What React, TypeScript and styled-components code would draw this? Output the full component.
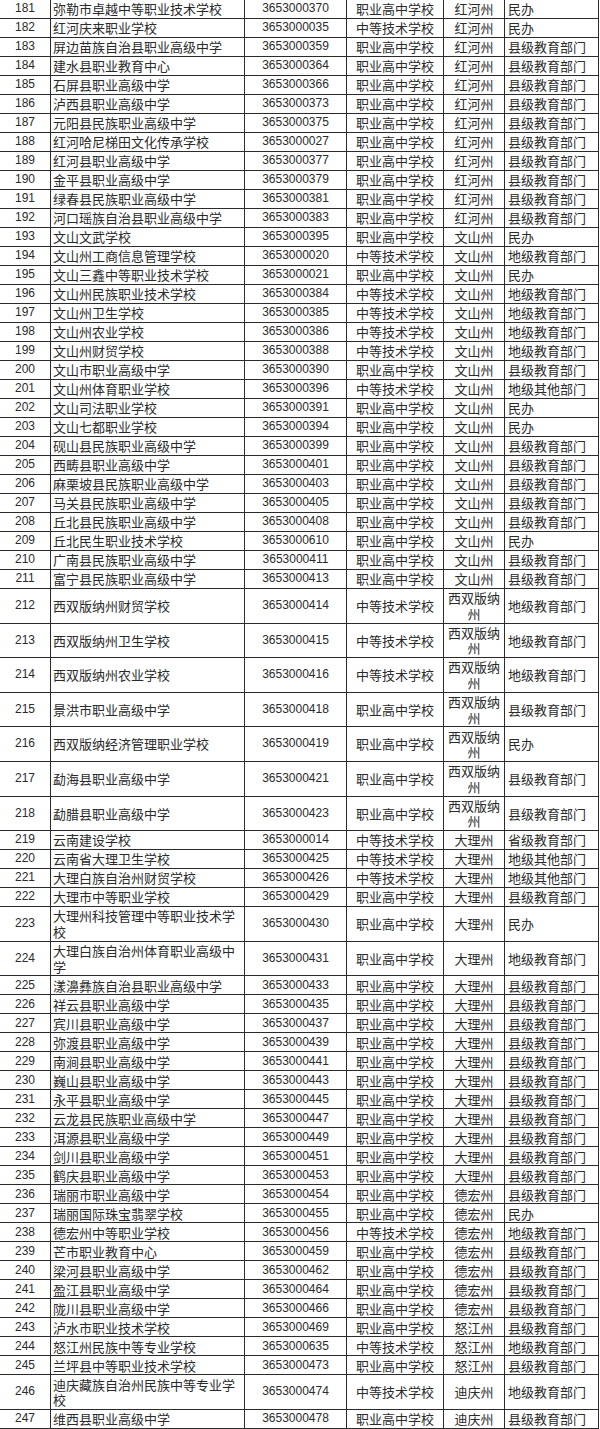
import React from 'react';
import styled, { createGlobalStyle } from 'styled-components';

const GlobalStyle = createGlobalStyle`
  html, body { margin: 0; padding: 0; background: #fff; }
  body { width: 600px; height: 1429px; overflow: hidden; }
`;

const Table = styled.div`
  display: flex;
  flex-direction: column;
  width: 599px;
  font-family: "Noto Sans CJK SC", "Liberation Sans", sans-serif;
  font-size: 13px;
  color: #2a2a2a;
`;

const Row = styled.div<{ $tall?: boolean }>`
  display: grid;
  grid-template-columns: 51px 194px 102px 97px 61px 94px;
  height: ${(p) => (p.$tall ? '34.6px' : '19px')};
  box-sizing: border-box;
  border-bottom: 1px solid #2b2b2b;
`;

const Cell = styled.div<{ $left?: boolean; $num?: boolean; $pad?: number }>`
  box-sizing: border-box;
  min-width: 0;
  border-right: 1px solid #2b2b2b;
  display: flex;
  align-items: center;
  justify-content: ${(p) => (p.$left ? 'flex-start' : 'center')};
  text-align: ${(p) => (p.$left ? 'left' : 'center')};
  padding: 0 1px 0 ${(p) => (p.$pad ?? 1)}px;
  line-height: 15.5px;
  font-family: ${(p) => (p.$num ? '"Liberation Sans", "Noto Sans CJK SC", sans-serif' : 'inherit')};
  font-size: ${(p) => (p.$num ? '12px' : '13px')};
`;

type R = [number, string, string, string, string, string];

const rows: R[] = [
  [181, '弥勒市卓越中等职业技术学校', '3653000370', '职业高中学校', '红河州', '民办'],
  [182, '红河庆来职业学校', '3653000035', '中等技术学校', '红河州', '民办'],
  [183, '屏边苗族自治县职业高级中学', '3653000359', '职业高中学校', '红河州', '县级教育部门'],
  [184, '建水县职业教育中心', '3653000364', '职业高中学校', '红河州', '县级教育部门'],
  [185, '石屏县职业高级中学', '3653000366', '职业高中学校', '红河州', '县级教育部门'],
  [186, '泸西县职业高级中学', '3653000373', '职业高中学校', '红河州', '县级教育部门'],
  [187, '元阳县民族职业高级中学', '3653000375', '职业高中学校', '红河州', '县级教育部门'],
  [188, '红河哈尼梯田文化传承学校', '3653000027', '职业高中学校', '红河州', '县级教育部门'],
  [189, '红河县职业高级中学', '3653000377', '职业高中学校', '红河州', '县级教育部门'],
  [190, '金平县职业高级中学', '3653000379', '职业高中学校', '红河州', '县级教育部门'],
  [191, '绿春县民族职业高级中学', '3653000381', '职业高中学校', '红河州', '县级教育部门'],
  [192, '河口瑶族自治县职业高级中学', '3653000383', '职业高中学校', '红河州', '县级教育部门'],
  [193, '文山文武学校', '3653000395', '职业高中学校', '文山州', '民办'],
  [194, '文山州工商信息管理学校', '3653000020', '中等技术学校', '文山州', '地级教育部门'],
  [195, '文山三鑫中等职业技术学校', '3653000021', '职业高中学校', '文山州', '民办'],
  [196, '文山州民族职业技术学校', '3653000384', '中等技术学校', '文山州', '地级教育部门'],
  [197, '文山州卫生学校', '3653000385', '中等技术学校', '文山州', '地级教育部门'],
  [198, '文山州农业学校', '3653000386', '中等技术学校', '文山州', '地级教育部门'],
  [199, '文山州财贸学校', '3653000388', '中等技术学校', '文山州', '地级教育部门'],
  [200, '文山市职业高级中学', '3653000390', '职业高中学校', '文山州', '县级教育部门'],
  [201, '文山州体育职业学校', '3653000396', '中等技术学校', '文山州', '地级其他部门'],
  [202, '文山司法职业学校', '3653000391', '职业高中学校', '文山州', '民办'],
  [203, '文山七都职业学校', '3653000394', '职业高中学校', '文山州', '民办'],
  [204, '砚山县民族职业高级中学', '3653000399', '职业高中学校', '文山州', '县级教育部门'],
  [205, '西畴县职业高级中学', '3653000401', '职业高中学校', '文山州', '县级教育部门'],
  [206, '麻栗坡县民族职业高级中学', '3653000403', '职业高中学校', '文山州', '县级教育部门'],
  [207, '马关县民族职业高级中学', '3653000405', '职业高中学校', '文山州', '县级教育部门'],
  [208, '丘北县民族职业高级中学', '3653000408', '职业高中学校', '文山州', '县级教育部门'],
  [209, '丘北民生职业技术学校', '3653000610', '职业高中学校', '文山州', '民办'],
  [210, '广南县民族职业高级中学', '3653000411', '职业高中学校', '文山州', '县级教育部门'],
  [211, '富宁县民族职业高级中学', '3653000413', '职业高中学校', '文山州', '县级教育部门'],
  [212, '西双版纳州财贸学校', '3653000414', '中等技术学校', '西双版纳州', '地级教育部门'],
  [213, '西双版纳州卫生学校', '3653000415', '中等技术学校', '西双版纳州', '地级教育部门'],
  [214, '西双版纳州农业学校', '3653000416', '中等技术学校', '西双版纳州', '地级教育部门'],
  [215, '景洪市职业高级中学', '3653000418', '职业高中学校', '西双版纳州', '县级教育部门'],
  [216, '西双版纳经济管理职业学校', '3653000419', '职业高中学校', '西双版纳州', '民办'],
  [217, '勐海县职业高级中学', '3653000421', '职业高中学校', '西双版纳州', '县级教育部门'],
  [218, '勐腊县职业高级中学', '3653000423', '职业高中学校', '西双版纳州', '县级教育部门'],
  [219, '云南建设学校', '3653000014', '中等技术学校', '大理州', '省级教育部门'],
  [220, '云南省大理卫生学校', '3653000425', '中等技术学校', '大理州', '地级其他部门'],
  [221, '大理白族自治州财贸学校', '3653000426', '中等技术学校', '大理州', '地级其他部门'],
  [222, '大理市中等职业学校', '3653000429', '职业高中学校', '大理州', '县级教育部门'],
  [223, '大理州科技管理中等职业技术学校', '3653000430', '职业高中学校', '大理州', '民办'],
  [224, '大理白族自治州体育职业高级中学', '3653000431', '职业高中学校', '大理州', '地级教育部门'],
  [225, '漾濞彝族自治县职业高级中学', '3653000433', '职业高中学校', '大理州', '县级教育部门'],
  [226, '祥云县职业高级中学', '3653000435', '职业高中学校', '大理州', '县级教育部门'],
  [227, '宾川县职业高级中学', '3653000437', '职业高中学校', '大理州', '县级教育部门'],
  [228, '弥渡县职业高级中学', '3653000439', '职业高中学校', '大理州', '县级教育部门'],
  [229, '南涧县职业高级中学', '3653000441', '职业高中学校', '大理州', '县级教育部门'],
  [230, '巍山县职业高级中学', '3653000443', '职业高中学校', '大理州', '县级教育部门'],
  [231, '永平县职业高级中学', '3653000445', '职业高中学校', '大理州', '县级教育部门'],
  [232, '云龙县民族职业高级中学', '3653000447', '职业高中学校', '大理州', '县级教育部门'],
  [233, '洱源县职业高级中学', '3653000449', '职业高中学校', '大理州', '县级教育部门'],
  [234, '剑川县职业高级中学', '3653000451', '职业高中学校', '大理州', '县级教育部门'],
  [235, '鹤庆县职业高级中学', '3653000453', '职业高中学校', '大理州', '县级教育部门'],
  [236, '瑞丽市职业高级中学', '3653000454', '职业高中学校', '德宏州', '县级教育部门'],
  [237, '瑞丽国际珠宝翡翠学校', '3653000455', '职业高中学校', '德宏州', '民办'],
  [238, '德宏州中等职业学校', '3653000456', '中等技术学校', '德宏州', '地级教育部门'],
  [239, '芒市职业教育中心', '3653000459', '职业高中学校', '德宏州', '县级教育部门'],
  [240, '梁河县职业高级中学', '3653000462', '职业高中学校', '德宏州', '县级教育部门'],
  [241, '盈江县职业高级中学', '3653000464', '职业高中学校', '德宏州', '县级教育部门'],
  [242, '陇川县职业高级中学', '3653000466', '职业高中学校', '德宏州', '县级教育部门'],
  [243, '泸水市职业技术学校', '3653000469', '职业高中学校', '怒江州', '县级教育部门'],
  [244, '怒江州民族中等专业学校', '3653000635', '中等技术学校', '怒江州', '地级教育部门'],
  [245, '兰坪县中等职业技术学校', '3653000473', '职业高中学校', '怒江州', '县级教育部门'],
  [246, '迪庆藏族自治州民族中等专业学校', '3653000474', '中等技术学校', '迪庆州', '地级教育部门'],
  [247, '维西县职业高级中学', '3653000478', '职业高中学校', '迪庆州', '县级教育部门'],
];

export default function App() {
  return (
    <>
      <GlobalStyle />
      <Table>
        {rows.map(([no, name, code, type, city, dept]) => {
          const tall = name.length > 14 || city.length > 4;
          return (
            <Row key={no} $tall={tall}>
              <Cell $num>{no}</Cell>
              <Cell $left $pad={2}>{name}</Cell>
              <Cell $num>{code}</Cell>
              <Cell>{type}</Cell>
              <Cell>{city}</Cell>
              <Cell $left $pad={3}>{dept}</Cell>
            </Row>
          );
        })}
      </Table>
    </>
  );
}
